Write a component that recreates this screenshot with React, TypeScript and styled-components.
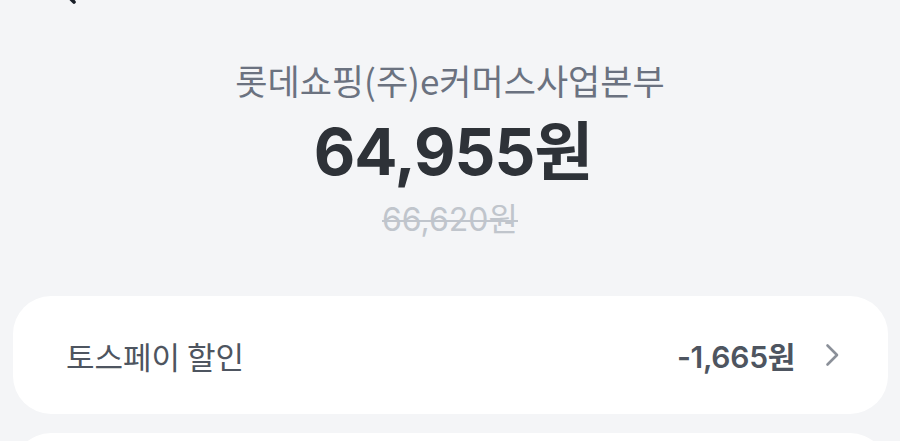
import React from "react";
import styled, { createGlobalStyle } from "styled-components";

const GlobalStyle = createGlobalStyle`
  html, body {
    margin: 0;
    padding: 0;
    background: #f4f5f7;
    font-family: "Noto Sans CJK KR", "Noto Sans", sans-serif;
  }
`;

const Page = styled.div`
  display: flex;
  flex-direction: column;
  width: 900px;
  height: 441px;
  overflow: hidden;
  background: #f4f5f7;
`;

const TopBar = styled.div`
  height: 6px;
  flex-shrink: 0;
  overflow: hidden;
  padding-left: 52px;

  svg {
    display: block;
    margin-top: -24px;
  }
`;

const Summary = styled.div`
  display: flex;
  flex-direction: column;
  align-items: center;
`;

const Merchant = styled.div`
  margin-top: 54px;
  font-size: 35px;
  line-height: 40px;
  color: #6b7280;
`;

const Amount = styled.div`
  margin-top: 14px;
  font-family: "Inter", "Noto Sans CJK KR", sans-serif;
  font-size: 64px;
  line-height: 76px;
  font-weight: 700;
  color: #2e3238;
  letter-spacing: -1px;
  padding-left: 6px;
`;

const OriginalPrice = styled.div`
  margin-top: 11px;
  font-family: "Inter", "Noto Sans CJK KR", sans-serif;
  font-size: 32px;
  line-height: 38px;
  color: #c0c5cc;
  text-decoration: line-through;
  text-decoration-thickness: 2px;
`;

const Card = styled.div<{ $top: number }>`
  margin: ${(p) => p.$top}px 12px 0 13px;
  min-height: 118px;
  flex-shrink: 0;
  background: #ffffff;
  border-radius: 38px;
  display: flex;
  align-items: center;
  justify-content: space-between;
  padding: 0 48px 0 53px;
  box-sizing: border-box;
`;

const Label = styled.span`
  font-size: 31px;
  color: #4e5560;
`;

const Right = styled.div`
  display: flex;
  align-items: center;
  gap: 30px;
`;

const Discount = styled.span`
  font-family: "Inter", "Noto Sans CJK KR", sans-serif;
  font-size: 30px;
  font-weight: 600;
  color: #4e5560;
  letter-spacing: -0.3px;
`;

const Chevron = () => (
  <svg width="15" height="24" viewBox="0 0 15 24" fill="none">
    <path d="M2.5 2.5 L12 12 L2.5 21.5" stroke="#8b9099" strokeWidth="2.6" strokeLinecap="round" strokeLinejoin="round" />
  </svg>
);

const BackArrow = () => (
  <svg width="30" height="30" viewBox="0 0 30 30" fill="none">
    <path d="M22 2 L10 14 L22 26" stroke="#191f28" strokeWidth="3.6" strokeLinecap="round" strokeLinejoin="round" />
  </svg>
);

export default function App() {
  return (
    <>
      <GlobalStyle />
      <Page>
        <TopBar>
          <BackArrow />
        </TopBar>
        <Summary>
          <Merchant>롯데쇼핑(주)e커머스사업본부</Merchant>
          <Amount>64,955원</Amount>
          <OriginalPrice>66,620원</OriginalPrice>
        </Summary>
        <Card $top={57}>
          <Label>토스페이 할인</Label>
          <Right>
            <Discount>-1,665원</Discount>
            <Chevron />
          </Right>
        </Card>
        <Card $top={19} />
      </Page>
    </>
  );
}
